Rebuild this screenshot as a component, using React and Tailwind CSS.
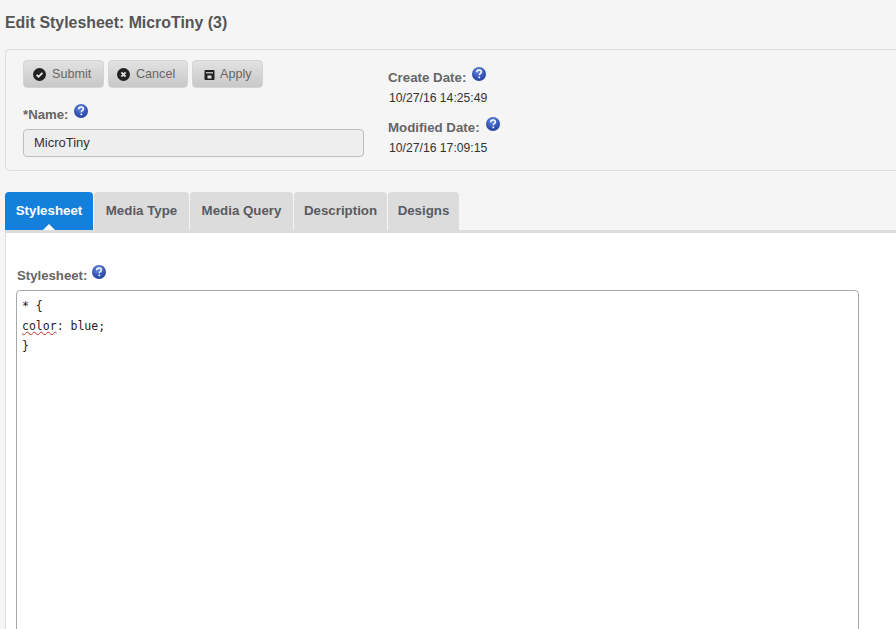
const F = { fontFamily: '"Liberation Sans", Arial, sans-serif' };

function Help() {
  return (
    <svg width="16" height="16" viewBox="0 0 16 16" className="shrink-0">
      <defs>
        <radialGradient id="hb" cx="45%" cy="30%" r="75%">
          <stop offset="0%" stopColor="#6f8fe0" />
          <stop offset="60%" stopColor="#3557b9" />
          <stop offset="100%" stopColor="#23408f" />
        </radialGradient>
      </defs>
      <circle cx="8" cy="8" r="7" fill="url(#hb)" />
      <path d="M5.7 6.2c.1-1.4 1.1-2.1 2.4-2.1 1.4 0 2.3.8 2.3 1.9 0 .9-.5 1.3-1.1 1.7-.6.4-.9.7-.9 1.3v.3" fill="none" stroke="#fff" strokeWidth="1.5" />
      <rect x="7.5" y="10.6" width="1.6" height="1.6" fill="#fff" />
    </svg>
  );
}

function SubmitIcon() {
  return (
    <svg width="13" height="13" viewBox="0 0 13 13">
      <circle cx="6.5" cy="6.5" r="6.5" fill="#222" />
      <path d="M3.6 6.8l2 2 3.8-4" fill="none" stroke="#eee" strokeWidth="1.8" />
    </svg>
  );
}
function CancelIcon() {
  return (
    <svg width="13" height="13" viewBox="0 0 13 13">
      <circle cx="6.5" cy="6.5" r="6.5" fill="#222" />
      <path d="M4.4 4.4l4.2 4.2M8.6 4.4l-4.2 4.2" fill="none" stroke="#ddd" strokeWidth="2" />
    </svg>
  );
}
function ApplyIcon() {
  return (
    <svg width="11" height="11" viewBox="0 0 11 11">
      <path d="M1.5 1h8a1 1 0 0 1 1 1v8a1 1 0 0 1-1 1h-8a1 1 0 0 1-1-1V2a1 1 0 0 1 1-1z" fill="#222" />
      <rect x="2" y="3.2" width="7" height="1.2" fill="#ddd" />
      <rect x="3.5" y="6.5" width="4" height="3" fill="#ddd" />
    </svg>
  );
}

function Btn({ w, pl, gap, icon, children }) {
  return (
    <div className={`${w} ${pl} ${gap} h-[28px] flex items-center rounded-[4px] border border-[#d4d4d4] bg-gradient-to-b from-[#e2e2e2] to-[#c8c8c8] text-[12.6px] text-[#666]`}>
      {icon}
      <span>{children}</span>
    </div>
  );
}

function Tab({ w, active, children }) {
  return (
    <div className={`${w} h-[38px] relative flex items-center justify-center rounded-t-[4px] text-[13.3px] font-bold ${active ? "bg-[#1580dc] text-white" : "bg-[#dcdcdc] text-[#5a5a60]"}`}>
      {children}
      {active && <div className="absolute bottom-0 left-1/2 -ml-[6px] w-0 h-0 border-x-[6px] border-x-transparent border-b-[6px] border-b-white" />}
    </div>
  );
}

export default function App() {
  return (
    <div style={F} className="w-[896px] h-[629px] overflow-hidden bg-[#f5f5f5] pl-[5px]">
      <div className="w-[1000px]">
        <h1 className="h-[49px] pt-[14px] text-[15.9px] leading-[17px] font-bold text-[#555]">Edit Stylesheet: MicroTiny (3)</h1>

        <div className="h-[122px] rounded-[4px] border border-[#dedede] pl-[17px] pt-[10px] flex">
          <div className="w-[341px] shrink-0">
            <div className="flex gap-[4px]">
              <Btn w="w-[81px]" pl="pl-[9px]" gap="gap-[6px]" icon={<SubmitIcon />}>Submit</Btn>
              <Btn w="w-[80px]" pl="pl-[8px]" gap="gap-[6px]" icon={<CancelIcon />}>Cancel</Btn>
              <Btn w="w-[71px]" pl="pl-[11px]" gap="gap-[5px]" icon={<ApplyIcon />}>Apply</Btn>
            </div>
            <div className="mt-[15px] h-[22px] flex items-start gap-[5px] text-[13.2px] font-bold text-[#666]">
              <span className="mt-[4px] leading-[15px]">*Name:</span>
              <Help />
            </div>
            <div className="mt-[4px] h-[28px] flex items-center pl-[10px] rounded-[4px] border border-[#bdbdbd] bg-[#eeeeee] text-[13px] text-[#333]">MicroTiny</div>
          </div>
          <div className="ml-[24px] pt-[6px]">
            <div className="flex items-start gap-[5px] h-[19px] text-[13.3px] font-bold text-[#666]">
              <span className="mt-[4px] leading-[15px]">Create Date:</span>
              <Help />
            </div>
            <div className="mt-[6px] h-[14px] pl-px text-[12.2px] leading-[14px] text-[#333]">10/27/16 14:25:49</div>
            <div className="mt-[11px] flex items-start gap-[5px] h-[19px] text-[13.3px] font-bold text-[#666]">
              <span className="mt-[4px] leading-[15px]">Modified Date:</span>
              <Help />
            </div>
            <div className="mt-[6px] h-[14px] pl-px text-[12.2px] leading-[14px] text-[#333]">10/27/16 17:09:15</div>
          </div>
        </div>

        <div className="mt-[21px] flex gap-px">
          <Tab w="w-[88px]" active>Stylesheet</Tab>
          <Tab w="w-[95px]">Media Type</Tab>
          <Tab w="w-[103px]">Media Query</Tab>
          <Tab w="w-[93px]">Description</Tab>
          <Tab w="w-[71px]">Designs</Tab>
        </div>

        <div className="h-[400px] border-t-[3px] border-t-[#dcdcdc] border-l border-l-[#dcdcdc] bg-white pl-[10px] pt-[31px]">
          <div className="h-[26px] pl-px flex items-start gap-[4px] text-[13.2px] font-bold text-[#666]">
            <span className="mt-[4px] leading-[15px]">Stylesheet:</span>
            <Help />
          </div>
          <div className="w-[843px] h-[400px] rounded-[4px] border border-[#a8a8a8] bg-white pl-[5px] pt-[5px] leading-[20px] text-[#222]" style={{ fontFamily: '"DejaVu Sans Mono", monospace', fontSize: "11.5px" }}>
            <div>* {"{"}</div>
            <div>
              <span className="underline decoration-wavy decoration-[#d03030] decoration-1">color</span>: blue;
            </div>
            <div>{"}"}</div>
          </div>
        </div>
      </div>
    </div>
  );
}
